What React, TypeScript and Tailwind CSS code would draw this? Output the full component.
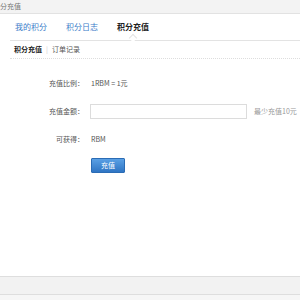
export default function App() {
  const font = { fontFamily: '"Noto Sans CJK SC", "Liberation Sans", sans-serif' };
  return (
    <div
      className="w-[300px] h-[300px] bg-white flex flex-col overflow-hidden text-[#333]"
      style={font}
    >
      {/* title bar */}
      <div className="h-[14px] bg-[#f3f3f3] border-b border-[#e2e2e2] text-[7px] leading-[13px] text-[#777]">
        分充值
      </div>

      {/* main tabs */}
      <div className="ml-[10px] h-[27px] border-b border-[#e3e3e3] flex items-center pl-[5px] text-[8px]">
        <span className="text-[#3b7cc9] w-[51px]">我的积分</span>
        <span className="text-[#3b7cc9] w-[51px]">积分日志</span>
        <span className="relative font-bold text-[#222]">
          积分充值
          <span className="absolute left-[13px] top-[14px] w-[6px] h-[6px] bg-white border-l border-t border-[#e3e3e3] rotate-45" />
        </span>
      </div>

      {/* sub tabs */}
      <div className="ml-[10px] h-[18px] border-b border-dotted border-[#ddd] flex items-center pl-[4px] text-[7px]">
        <span className="font-bold text-[#222]">积分充值</span>
        <span className="mx-[4px] text-[#ccc]">|</span>
        <span className="text-[#555]">订单记录</span>
      </div>

      {/* form */}
      <div className="flex flex-col text-[7px] text-[#555] pt-[18px]">
        <div className="flex items-center h-[12px]">
          <span className="w-[84px] text-right">充值比例：</span>
          <span className="ml-[7px]">1RBM = 1元</span>
        </div>
        <div className="flex items-center h-[15px] mt-[15px]">
          <span className="w-[84px] text-right">充值金额：</span>
          <div className="ml-[6px] w-[157px] h-[15px] border border-[#dcdcdc] bg-white" />
          <span className="ml-[7px] text-[#999] whitespace-nowrap">最少充值10元</span>
        </div>
        <div className="flex items-center h-[12px] mt-[14px]">
          <span className="w-[84px] text-right">可获得：</span>
          <span className="ml-[7px]">RBM</span>
        </div>
        <div className="pl-[91px] mt-[13px]">
          <div className="w-[34px] h-[15px] rounded-[1px] bg-gradient-to-b from-[#5aa0e4] to-[#2f75c4] border border-[#2b6cb5] flex items-center justify-center text-white text-[7px]">
            充值
          </div>
        </div>
      </div>

      <div className="flex-1" />

      {/* footer */}
      <div className="h-[19px] bg-[#f2f2f2] border-t border-b border-[#dedede]" />
      <div className="h-[5px] bg-[#f6f6f6]" />
    </div>
  );
}
